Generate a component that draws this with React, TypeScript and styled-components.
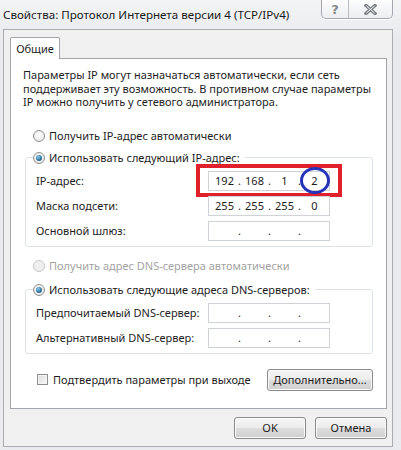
import React from "react";
import styled, { createGlobalStyle } from "styled-components";

const Global = createGlobalStyle`
  html, body { margin: 0; padding: 0; background: #eceef1; }
  body { font-family: "Noto Sans", "Open Sans", sans-serif; }
  * { box-sizing: border-box; }
`;

const Window = styled.div`
  width: 401px;
  height: 450px;
  display: flex;
  flex-direction: column;
  padding: 0 8px 4px 3px;
  background: linear-gradient(#f3f4f6, #e8eaed 40px, #e9ebee);
  color: #1e1e1e;
  font-size: 11px;
  overflow: hidden;
`;

const TitleBar = styled.div`
  height: 29px;
  display: flex;
  align-items: flex-start;
  flex-shrink: 0;
`;

const Title = styled.div`
  font-size: 11.6px;
  color: #1a1a1a;
  line-height: 30px;
  white-space: nowrap;
  flex: 1;
  min-width: 0;
`;

const Controls = styled.div`
  flex-shrink: 0;
  display: flex;
  border: 1px solid #a4a9b0;
  border-top: none;
  border-radius: 0 0 5px 5px;
  overflow: hidden;
  background: linear-gradient(#fdfdfd, #eceef1);
  height: 19px;
  box-shadow: 0 1px 0 #ffffff;
`;

const CtrlBtn = styled.div<{ $w: number }>`
  width: ${(p) => p.$w}px;
  height: 18px;
  display: flex;
  align-items: center;
  justify-content: center;
  color: #85898f;
  font-size: 13px;
  font-weight: bold;
  font-family: "DejaVu Sans", sans-serif;
  & + & { border-left: 1px solid #b9bdc3; }
`;

const Client = styled.div`
  flex: 1;
  display: flex;
  flex-direction: column;
  background: #f0f0f0;
  border: 1px solid #a9acb1;
  padding: 7px 5px 7px 6px;
`;

const Tabs = styled.div`
  display: flex;
  position: relative;
  z-index: 1;
  margin-bottom: -1px;
`;

const Tab = styled.div`
  width: 50px;
  height: 22px;
  background: #fff;
  border: 1px solid #a2a5aa;
  border-bottom: none;
  border-radius: 2px 2px 0 0;
  display: flex;
  align-items: center;
  justify-content: center;
`;

const Panel = styled.div`
  background: #fff;
  border: 1px solid #a2a5aa;
  display: flex;
  flex-direction: column;
  padding: 9px 13px 17px 14px;
`;

const Para = styled.p`
  margin: 0 0 0 -2px;
  line-height: 13.5px;
  white-space: nowrap;
`;

const OptionRow = styled.label<{ $disabled?: boolean; $mt: number }>`
  display: flex;
  align-items: center;
  gap: 4px;
  height: 16px;
  margin-top: ${(p) => p.$mt}px;
  margin-left: 8px;
  color: ${(p) => (p.$disabled ? "#a3a3a3" : "#1e1e1e")};
`;

const Radio = styled.span<{ $checked?: boolean; $disabled?: boolean }>`
  width: 12px;
  height: 12px;
  border-radius: 50%;
  border: 1px solid ${(p) => (p.$disabled ? "#c9c9c9" : "#8e8f8f")};
  background: ${(p) =>
    p.$disabled
      ? "#efefef"
      : "radial-gradient(circle at 50% 40%, #ffffff, #e2e2e2)"};
  display: inline-flex;
  align-items: center;
  justify-content: center;
  flex-shrink: 0;
  &::after {
    content: "";
    display: ${(p) => (p.$checked ? "block" : "none")};
    width: 6px;
    height: 6px;
    border-radius: 50%;
    background: radial-gradient(circle at 40% 35%, #8fd0ef, #2a6f9a 60%, #164a6e);
  }
`;

const Group = styled.fieldset<{ $mt: number }>`
  margin: ${(p) => p.$mt}px 0 0 0;
  border: 1px solid #dde3e8;
  border-radius: 3px;
  padding: 5px 0 5px 0;
  min-width: 0;
`;

const Legend = styled.legend`
  padding: 0 5px 0 0;
  margin-left: 7px;
  height: 16px;
  display: flex;
  align-items: center;
  gap: 4px;
`;

const Rows = styled.div`
  display: grid;
  grid-template-columns: 172px 122px;
  row-gap: 5px;
  padding-left: 10px;
  align-items: center;
`;

const FieldLabel = styled.span`
  white-space: nowrap;
`;

const IpBox = styled.div`
  position: relative;
  height: 20px;
  border: 1px solid #cfd3d8;
  background: #fff;
  display: flex;
  align-items: center;
  padding-left: 3px;
`;

const Octet = styled.span`
  width: 25px;
  text-align: center;
`;

const Dot = styled.span`
  width: 5px;
  text-align: center;
`;

const RedFrame = styled.div`
  position: absolute;
  left: -13px;
  top: -8px;
  width: 146px;
  height: 33px;
  border: 4px solid #e0202a;
  pointer-events: none;
`;

const BlueRing = styled.div`
  position: absolute;
  left: 91px;
  top: -5px;
  width: 30px;
  height: 27px;
  border: 3px solid #2733b8;
  border-radius: 50%;
  pointer-events: none;
`;

const BottomRow = styled.div`
  margin-top: 15px;
  display: flex;
  align-items: center;
  height: 22px;
`;

const Check = styled.label`
  display: flex;
  align-items: center;
  gap: 5px;
  margin-left: 12px;
`;

const CheckBox = styled.span`
  width: 11px;
  height: 11px;
  border: 1px solid #8e8f8f;
  background: linear-gradient(135deg, #dcdcdc, #f8f8f8);
  box-shadow: inset 0 0 0 1px #f4f4f4;
`;

const Button = styled.button<{ $w: number }>`
  width: ${(p) => p.$w}px;
  height: 22px;
  border: 1px solid #8a8a8a;
  border-radius: 3px;
  background: linear-gradient(#f6f6f6 0%, #ebebeb 50%, #dddddd 51%, #cfcfcf 100%);
  box-shadow: inset 0 0 0 1px #fbfbfb;
  font-family: inherit;
  font-size: 11px;
  color: #1e1e1e;
  padding: 0;
  white-space: nowrap;
`;

const Push = styled.div`
  margin-left: auto;
  display: flex;
`;

const Footer = styled.div`
  display: flex;
  justify-content: flex-end;
  margin-top: 8px;
  gap: 9px;
`;

function Ip({ parts }: { parts: string[] }) {
  return (
    <>
      <Octet>{parts[0]}</Octet>
      <Dot>.</Dot>
      <Octet>{parts[1]}</Octet>
      <Dot>.</Dot>
      <Octet>{parts[2]}</Octet>
      <Dot>.</Dot>
      <Octet>{parts[3]}</Octet>
    </>
  );
}

const CloseIcon = () => (
  <svg width="13" height="11" viewBox="0 0 13 11">
    <path d="M2 1.5 L11 9.5 M11 1.5 L2 9.5" stroke="#7f838a" strokeWidth="3.4" strokeLinecap="square" />
    <path d="M2.5 2 L10.5 9 M10.5 2 L2.5 9" stroke="#eef0f2" strokeWidth="1" strokeLinecap="butt" />
  </svg>
);

export default function App() {
  const empty = ["", "", "", ""];
  return (
    <>
      <Global />
      <Window>
        <TitleBar>
          <Title>Свойства: Протокол Интернета версии 4 (TCP/IPv4)</Title>
          <Controls>
            <CtrlBtn $w={26}>?</CtrlBtn>
            <CtrlBtn $w={44}>
              <CloseIcon />
            </CtrlBtn>
          </Controls>
        </TitleBar>
        <Client>
          <Tabs>
            <Tab>Общие</Tab>
          </Tabs>
          <Panel>
            <Para>
              Параметры IP могут назначаться автоматически, если сеть
              <br />
              поддерживает эту возможность. В противном случае параметры
              <br />
              IP можно получить у сетевого администратора.
            </Para>
            <OptionRow $mt={19}>
              <Radio />
              Получить IP-адрес автоматически
            </OptionRow>
            <Group $mt={6}>
              <Legend>
                <Radio $checked />
                Использовать следующий IP-адрес:
              </Legend>
              <Rows>
                <FieldLabel>IP-адрес:</FieldLabel>
                <IpBox>
                  <Ip parts={["192", "168", "1", "2"]} />
                  <RedFrame />
                  <BlueRing />
                </IpBox>
                <FieldLabel>Маска подсети:</FieldLabel>
                <IpBox>
                  <Ip parts={["255", "255", "255", "0"]} />
                </IpBox>
                <FieldLabel>Основной шлюз:</FieldLabel>
                <IpBox>
                  <Ip parts={empty} />
                </IpBox>
              </Rows>
            </Group>
            <OptionRow $mt={11} $disabled>
              <Radio $disabled />
              Получить адрес DNS-сервера автоматически
            </OptionRow>
            <Group $mt={8}>
              <Legend>
                <Radio $checked />
                Использовать следующие адреса DNS-серверов:
              </Legend>
              <Rows>
                <FieldLabel>Предпочитаемый DNS-сервер:</FieldLabel>
                <IpBox>
                  <Ip parts={empty} />
                </IpBox>
                <FieldLabel>Альтернативный DNS-сервер:</FieldLabel>
                <IpBox>
                  <Ip parts={empty} />
                </IpBox>
              </Rows>
            </Group>
            <BottomRow>
              <Check>
                <CheckBox />
                Подтвердить параметры при выходе
              </Check>
              <Push>
                <Button $w={106}>Дополнительно...</Button>
              </Push>
            </BottomRow>
          </Panel>
          <Footer>
            <Button $w={72}>OK</Button>
            <Button $w={72}>Отмена</Button>
          </Footer>
        </Client>
      </Window>
    </>
  );
}
